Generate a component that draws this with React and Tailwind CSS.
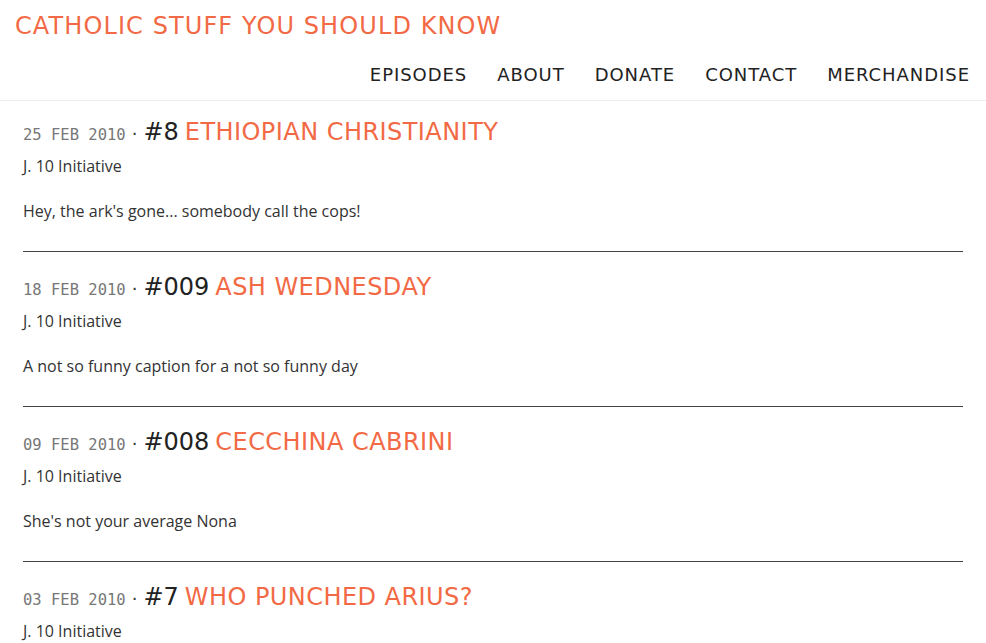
import React from "react";

const episodes = [
  { date: "25 FEB 2010", num: "#8", title: "ETHIOPIAN CHRISTIANITY", author: "J. 10 Initiative", desc: "Hey, the ark's gone... somebody call the cops!" },
  { date: "18 FEB 2010", num: "#009", title: "ASH WEDNESDAY", author: "J. 10 Initiative", desc: "A not so funny caption for a not so funny day" },
  { date: "09 FEB 2010", num: "#008", title: "CECCHINA CABRINI", author: "J. 10 Initiative", desc: "She's not your average Nona" },
  { date: "03 FEB 2010", num: "#7", title: "WHO PUNCHED ARIUS?", author: "J. 10 Initiative", desc: "" },
];

const nav = ["EPISODES", "ABOUT", "DONATE", "CONTACT", "MERCHANDISE"];

export default function App() {
  return (
    <div className="min-h-screen bg-white font-['Open_Sans',sans-serif] text-[#333]">
      <header className="border-b border-[#ececec] h-[101px] flex flex-col">
        <a className="pl-[15px] pt-[10px] text-[24px] leading-[32px] text-[#f26a45] font-['DejaVu_Sans',sans-serif] tracking-[1.1px]">
          CATHOLIC STUFF YOU SHOULD KNOW
        </a>
        <nav className="flex justify-end gap-[30px] pr-[16px] mt-[21px] text-[18px] leading-[24px] text-[#222] font-['DejaVu_Sans',sans-serif] tracking-[0.95px]">
          {nav.map((n) => (
            <a key={n}>{n}</a>
          ))}
        </nav>
      </header>
      <main className="px-[23px] pt-[16px]">
        {episodes.map((e, i) => (
          <article key={i} className="w-[940px]">
            <h2 className="flex items-baseline text-[24px] leading-[30px] font-['DejaVu_Sans',sans-serif]">
              <span className="font-['DejaVu_Sans_Mono',monospace] text-[15.5px] text-[#777]">{e.date}</span>
              <span className="mx-[6px] text-[#333] text-[18px]">·</span>
              <span className="text-[#222]">{e.num}</span>
              <span className="ml-[6px] text-[#f26a45] tracking-[0.45px]">{e.title}</span>
            </h2>
            <p className="mt-[4px] text-[16px] leading-[24px]">{e.author}</p>
            <p className="mt-[21px] text-[16px] leading-[24px]">{e.desc}</p>
            {i < episodes.length - 1 && <hr className="mt-[28px] mb-[20px] border-0 border-t border-[#444]" />}
          </article>
        ))}
      </main>
    </div>
  );
}
